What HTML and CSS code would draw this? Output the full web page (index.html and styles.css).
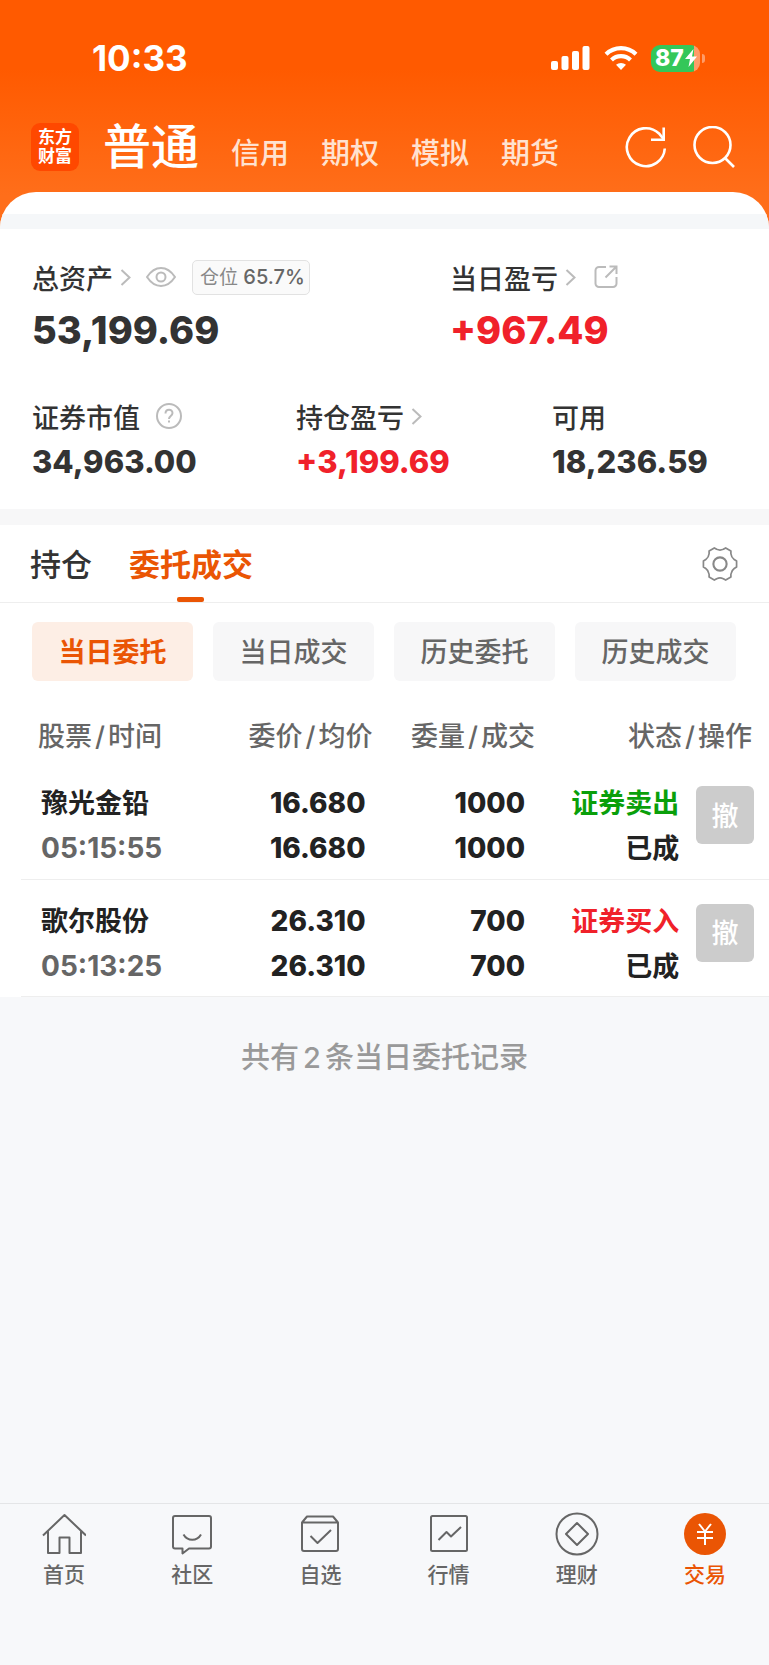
FILE: index.html
```html
<!DOCTYPE html>
<html lang="zh-CN">
<head>
  <meta charset="UTF-8">
  <meta name="viewport" content="width=device-width, initial-scale=1.0">
  <title>东方财富 - 交易</title>
  <link rel="stylesheet" href="styles.css">
</head>
<body>
  <header class="header">
    <div class="status-bar">
      <span class="clock">10:33</span>
      <div class="status-icons">
        <svg width="39" height="26" viewBox="0 0 39 26" fill="#fff">
          <rect x="0" y="16" width="7" height="9" rx="2"/>
          <rect x="10.5" y="11" width="7" height="14" rx="2"/>
          <rect x="21" y="6" width="7" height="19" rx="2"/>
          <rect x="31.5" y="1" width="7" height="24" rx="2"/>
        </svg>
        <svg class="wifi" width="34" height="26" viewBox="0 0 34 26">
          <g fill="none" stroke="#fff" stroke-width="4.2">
            <path d="M2 9.3a21.5 21.5 0 0 1 30 0"/>
            <path d="M7.5 15a13.6 13.6 0 0 1 19 0"/>
          </g>
          <path fill="#fff" d="M17 25l-5-5.2a7.5 7.5 0 0 1 10 0z"/>
        </svg>
        <div class="battery">
          <span>87</span>
          <svg width="12" height="18" viewBox="0 0 12 18"><path fill="#fff" d="M8.5 0L0 10h5L3.5 18 12 7.5H7z"/></svg>
        </div>
      </div>
    </div>
    <div class="nav-top">
      <div class="logo">东方<br>财富</div>
      <nav class="accounts">
        <a href="#" class="active">普通</a>
        <a href="#">信用</a>
        <a href="#">期权</a>
        <a href="#">模拟</a>
        <a href="#">期货</a>
      </nav>
      <div class="tools">
        <button aria-label="刷新">
          <svg width="42" height="42" viewBox="0 0 42 42" fill="none" stroke="#fff" stroke-width="2.6">
            <path d="M39.8 22.5A19 19 0 1 1 34 7.500L38.500 13"/>
            <path d="M38.700 1.500v12.300H26"/>
          </svg>
        </button>
        <button aria-label="搜索">
          <svg width="42" height="42" viewBox="0 0 42 42" fill="none" stroke="#fff" stroke-width="2.6">
            <circle cx="19.5" cy="19" r="18"/>
            <path d="M31.500 31.500L41 41"/>
          </svg>
        </button>
      </div>
    </div>
  </header>

  <main class="panel">
    <div class="strip"></div>

    <section class="summary">
      <div class="row row-total">
        <div>
          <div class="label label-lg">
            总资产
            <svg class="arrow" width="11" height="17" viewBox="0 0 11 17"><path d="M1.500 1L9.500 8.500l-8 7.500"/></svg>
            <svg class="eye" width="30" height="20" viewBox="0 0 30 20"><path d="M1 10C5 4 9.500 1 15 1s10 3 14 9c-4 6-8.500 9-14 9S5 16 1 10z"/><circle cx="15" cy="10" r="4.5"/></svg>
            <span class="badge">仓位 <b>65.7%</b></span>
          </div>
          <div class="value value-lg">53,199.69</div>
        </div>
        <div>
          <div class="label label-lg">
            当日盈亏
            <svg class="arrow" width="11" height="17" viewBox="0 0 11 17"><path d="M1.500 1L9.500 8.500l-8 7.500"/></svg>
            <svg class="share" width="24" height="24" viewBox="0 0 24 24"><path d="M12 2H5a3.500 3.500 0 0 0-3.500 3.500v13A3.500 3.500 0 0 0 5 22h14a3.500 3.500 0 0 0 3.500-3.500V12M11.500 12.500L22 2M15.500 1.500h7V9"/></svg>
          </div>
          <div class="value value-lg red">+967.49</div>
        </div>
      </div>
      <div class="row row-detail">
        <div>
          <div class="label">
            证券市值
            <svg class="help" width="26" height="26" viewBox="0 0 26 26"><circle cx="13" cy="13" r="12"/><path d="M9.500 10.500c0-5 7-5 7-.500 0 3-3.500 3-3.500 6M13 17.500v2"/></svg>
          </div>
          <div class="value">34,963.00</div>
        </div>
        <div>
          <div class="label">
            持仓盈亏
            <svg class="arrow" width="11" height="17" viewBox="0 0 11 17"><path d="M1.500 1L9.500 8.500l-8 7.500"/></svg>
          </div>
          <div class="value red">+3,199.69</div>
        </div>
        <div>
          <div class="label">可用</div>
          <div class="value">18,236.59</div>
        </div>
      </div>
    </section>

    <div class="tabs">
      <button class="tab">持仓</button>
      <button class="tab active">委托成交</button>
      <button class="settings" aria-label="设置">
        <svg width="36" height="36" viewBox="0 0 38 38" fill="none" stroke="#888" stroke-width="1.8" stroke-linejoin="round">
          <path d="M13 2l2.500 1.500c2.300 1 4.700 1 7 0L25 2l5.500 3.200v3c.300 2.600 1.400 4.500 3.500 6l2.500 1.600v6.400L34 23.800c-2.100 1.500-3.200 3.400-3.500 6v3L25 36l-2.500-1.500c-2.300-1-4.700-1-7 0L13 36l-5.500-3.200v-3c-.300-2.600-1.400-4.500-3.500-6l-2.500-1.600v-6.400L4 14.200c2.100-1.500 3.200-3.400 3.500-6v-3z"/>
          <circle cx="19" cy="19" r="7" stroke-width="2.2"/>
        </svg>
      </button>
    </div>

    <div class="chips">
      <button class="chip active">当日委托</button>
      <button class="chip">当日成交</button>
      <button class="chip">历史委托</button>
      <button class="chip">历史成交</button>
    </div>

    <table class="orders">
      <colgroup>
        <col class="col-name">
        <col class="col-price">
        <col class="col-qty">
        <col>
        <col class="col-action">
      </colgroup>
      <thead>
        <tr>
          <th class="head-name">股票<span>/</span>时间</th>
          <th>委价<span>/</span>均价</th>
          <th class="head-qty">委量<span>/</span>成交</th>
          <th class="head-state" colspan="2">状态<span>/</span>操作</th>
        </tr>
      </thead>
      <tbody>
        <tr>
          <td class="name">豫光金铅<br><span class="time">05:15:55</span></td>
          <td class="num">16.680<br>16.680</td>
          <td class="num qty">1000<br>1000</td>
          <td class="state"><span class="green">证券卖出</span><br>已成</td>
          <td class="action"><button class="cancel" disabled>撤</button></td>
        </tr>
        <tr>
          <td class="name">歌尔股份<br><span class="time">05:13:25</span></td>
          <td class="num">26.310<br>26.310</td>
          <td class="num qty">700<br>700</td>
          <td class="state"><span class="red">证券买入</span><br>已成</td>
          <td class="action"><button class="cancel" disabled>撤</button></td>
        </tr>
      </tbody>
    </table>
  </main>

  <p class="total">共有<span>2</span>条当日委托记录</p>

  <nav class="bottom-nav">
    <a href="#">
      <svg width="44" height="44" viewBox="0 0 44 44"><path d="M1 23.500L22.500 3 44 23.500M6 19.500V41h11.500V25.500h10V41H39V19.500"/></svg>
      首页
    </a>
    <a href="#">
      <svg width="44" height="44" viewBox="0 0 44 44"><path d="M5 4h34a2 2 0 0 1 2 2v28.500a2 2 0 0 1-2 2H19L12.500 41.500v-5H5a2 2 0 0 1-2-2V6a2 2 0 0 1 2-2zM13.500 22.500c4 7 13.500 7 17.500 0"/></svg>
      社区
    </a>
    <a href="#">
      <svg width="44" height="44" viewBox="0 0 44 44"><path d="M4 10.500h36V37a2 2 0 0 1-2 2H6a2 2 0 0 1-2-2zM4 10.500L9 4.500h26l5 6M12.500 24l7 7L33 18"/></svg>
      自选
    </a>
    <a href="#">
      <svg width="44" height="44" viewBox="0 0 44 44"><rect x="4" y="4" width="36" height="35" rx="1.5"/><path d="M11.500 28l8-8 4.500 4.500 10-9.500"/></svg>
      行情
    </a>
    <a href="#">
      <svg width="44" height="44" viewBox="0 0 44 44"><circle cx="22" cy="22" r="20.5"/><path d="M22 11l11 11-11 11-11-11z"/></svg>
      理财
    </a>
    <a href="#" class="active">
      <svg width="44" height="44" viewBox="0 0 44 44"><circle cx="22" cy="22" r="21" fill="#ea5504" stroke="none"/><path stroke="#fff" d="M16 12l6 7.500 6-7.500M22 19.500V33M14 20h16M14 26h16"/></svg>
      交易
    </a>
  </nav>
</body>
</html>
```

FILE: styles.css
```css
* {
  box-sizing: border-box;
  margin: 0;
  padding: 0;
}
body {
  min-height: 100vh;
  display: flex;
  flex-direction: column;
  font-family: Inter, "Noto Sans CJK SC", sans-serif;
  color: #333;
  background: #f7f8fa;
}
button {
  border: none;
  background: none;
  font-family: inherit;
  cursor: pointer;
}
a {
  color: inherit;
  text-decoration: none;
}
svg {
  display: block;
  flex: none;
}
.red {
  color: #f0212a;
}
.green {
  color: #0a9f0a;
}

/* header */
.header {
  background: linear-gradient(#ff5a00 30%, #ff6e1a 85%);
  color: #fff;
  padding: 36px 34px 38px 31px;
  margin-bottom: -38px;
}
.status-bar {
  display: flex;
  justify-content: space-between;
  align-items: center;
  height: 44px;
  padding: 0 35px 0 61px;
}
.clock {
  font-size: 35px;
  font-weight: 700;
}
.status-icons {
  display: flex;
  align-items: center;
}
.wifi {
  margin: 0 13px 0 14px;
}
.battery {
  position: relative;
  display: flex;
  align-items: center;
  gap: 1px;
  width: 49px;
  height: 27px;
  padding-left: 4px;
  border-radius: 9px;
  background: linear-gradient(90deg, #34c759 87%, #ff9c68 87%);
  font-size: 23px;
  font-weight: 800;
}
.battery::after {
  content: "";
  position: absolute;
  right: -5px;
  top: 9px;
  width: 3px;
  height: 9px;
  border-radius: 0 3px 3px 0;
  background: #ff9c68;
}
.nav-top {
  display: flex;
  align-items: center;
  height: 76px;
  margin-top: 36px;
  padding-bottom: 14px;
}
.logo {
  width: 48px;
  height: 48px;
  padding-top: 5px;
  border-radius: 9px;
  background: #ff4800;
  font-size: 17px;
  line-height: 19px;
  font-weight: 700;
  text-align: center;
}
.accounts {
  display: flex;
  align-items: baseline;
  gap: 32px;
  margin-left: 24px;
  padding-top: 7px;
  font-size: 29px;
  line-height: 56px;
  font-weight: 500;
  color: #ffe2d0;
}
.accounts .active {
  font-size: 48px;
  color: #fff;
}
.tools {
  display: flex;
  gap: 26px;
  margin-left: auto;
}

/* assets */
.panel {
  padding-top: 22px;
  background: #fff;
  border-radius: 36px 36px 0 0;
  overflow: hidden;
}
.strip {
  height: 15px;
  background: #f5f7f9;
}
.summary {
  padding: 30px 33px 30px 32px;
  border-bottom: 16px solid #f7f7f8;
}
.row {
  display: grid;
}
.row-total {
  grid-template-columns: 19fr 13fr;
  margin-bottom: 48px;
}
.row-detail {
  grid-template-columns: 33fr 32fr 23fr;
}
.label {
  display: flex;
  align-items: center;
  height: 30px;
  margin-bottom: 14px;
  font-size: 27px;
  font-weight: 500;
}
.label-lg {
  height: 36px;
  margin-bottom: 12px;
}
.label svg {
  fill: none;
  stroke: #bbb;
  stroke-width: 2;
}
.label .arrow {
  margin-left: 7px;
}
.label .eye {
  margin: 0 16px 0 15px;
}
.label .share {
  margin-left: 18px;
}
.label .help {
  margin-left: 16px;
}
.badge {
  padding: 0 4px 0 7px;
  border: 1px solid #e2e2e2;
  border-radius: 5px;
  background: #fafafa;
  font-size: 19px;
  line-height: 32px;
  font-weight: 400;
  color: #888;
  white-space: nowrap;
}
.badge b {
  font-weight: 500;
  font-size: 20px;
  color: #666;
}
.value {
  font-size: 31px;
  line-height: 34px;
  font-weight: 800;
}
.value-lg {
  font-size: 38px;
  line-height: 46px;
}

/* tabs */
.tabs {
  display: flex;
  align-items: stretch;
  gap: 37px;
  height: 78px;
  padding: 0 31px 0 30px;
  border-bottom: 1px solid #eee;
}
.tab {
  position: relative;
  padding-bottom: 2px;
  font-size: 31px;
  font-weight: 500;
  color: #333;
}
.tab.active {
  font-weight: 700;
  color: #ea5504;
}
.tab.active::after {
  content: "";
  position: absolute;
  left: 50%;
  bottom: 0;
  width: 27px;
  height: 5px;
  margin-left: -14px;
  border-radius: 2px;
  background: #ea5504;
}
.settings {
  margin-left: auto;
}
.chips {
  display: flex;
  gap: 20px;
  padding: 19px 33px 27px 32px;
}
.chip {
  flex: 1;
  height: 59px;
  padding-bottom: 2px;
  border-radius: 6px;
  background: #f7f7f8;
  font-size: 27px;
  font-weight: 500;
  color: #666;
}
.chip.active {
  background: #fdeee5;
  font-weight: 700;
  color: #ea5504;
}

/* order list */
.orders {
  width: calc(100% - 21px);
  margin-left: 21px;
  table-layout: fixed;
  border-collapse: collapse;
  text-align: right;
}
.col-name {
  width: 26%;
}
.col-price {
  width: 21%;
}
.col-qty {
  width: 22%;
}
.col-action {
  width: 12%;
}
.orders th {
  height: 54px;
  padding-bottom: 2px;
  font-size: 27px;
  font-weight: 500;
  color: #666;
}
.orders th span {
  margin: 0 3px;
}
.orders .head-name {
  padding-left: 17px;
  text-align: left;
}
.orders .head-qty {
  padding-right: 2px;
}
.orders .head-state {
  padding-right: 17px;
}
.orders td {
  height: 117px;
  padding: 19px 0 7px;
  border-bottom: 1px solid #eee;
  vertical-align: top;
  font-size: 27px;
  line-height: 45px;
  font-weight: 700;
  color: #222;
}
.orders .name {
  padding-left: 20px;
  text-align: left;
}
.orders .time {
  font-size: 28px;
  color: #666;
}
.orders .num {
  padding-right: 7px;
  font-size: 28px;
  font-weight: 800;
}
.orders .qty {
  padding-right: 12px;
}
.orders .action {
  padding: 24px 15px 0 0;
}
.cancel {
  width: 58px;
  height: 58px;
  padding-bottom: 2px;
  border-radius: 6px;
  background: #ccc;
  font-size: 27px;
  font-weight: 500;
  color: #fff;
  vertical-align: top;
}
.total {
  padding: 41px 0;
  font-size: 29px;
  line-height: 40px;
  font-weight: 500;
  text-align: center;
  color: #999;
}
.total span {
  margin: 0 4px;
}

/* bottom navigation */
.bottom-nav {
  display: flex;
  margin-top: auto;
  padding: 8px 0 78px;
  border-top: 1px solid #e4e5e7;
}
.bottom-nav a {
  flex: 1;
  display: flex;
  flex-direction: column;
  align-items: center;
  gap: 7px;
  font-size: 21px;
  line-height: 24px;
  font-weight: 500;
  color: #666;
}
.bottom-nav svg {
  fill: none;
  stroke: #666;
  stroke-width: 2;
  stroke-linejoin: round;
}
.bottom-nav .active {
  color: #ea5504;
}
```
